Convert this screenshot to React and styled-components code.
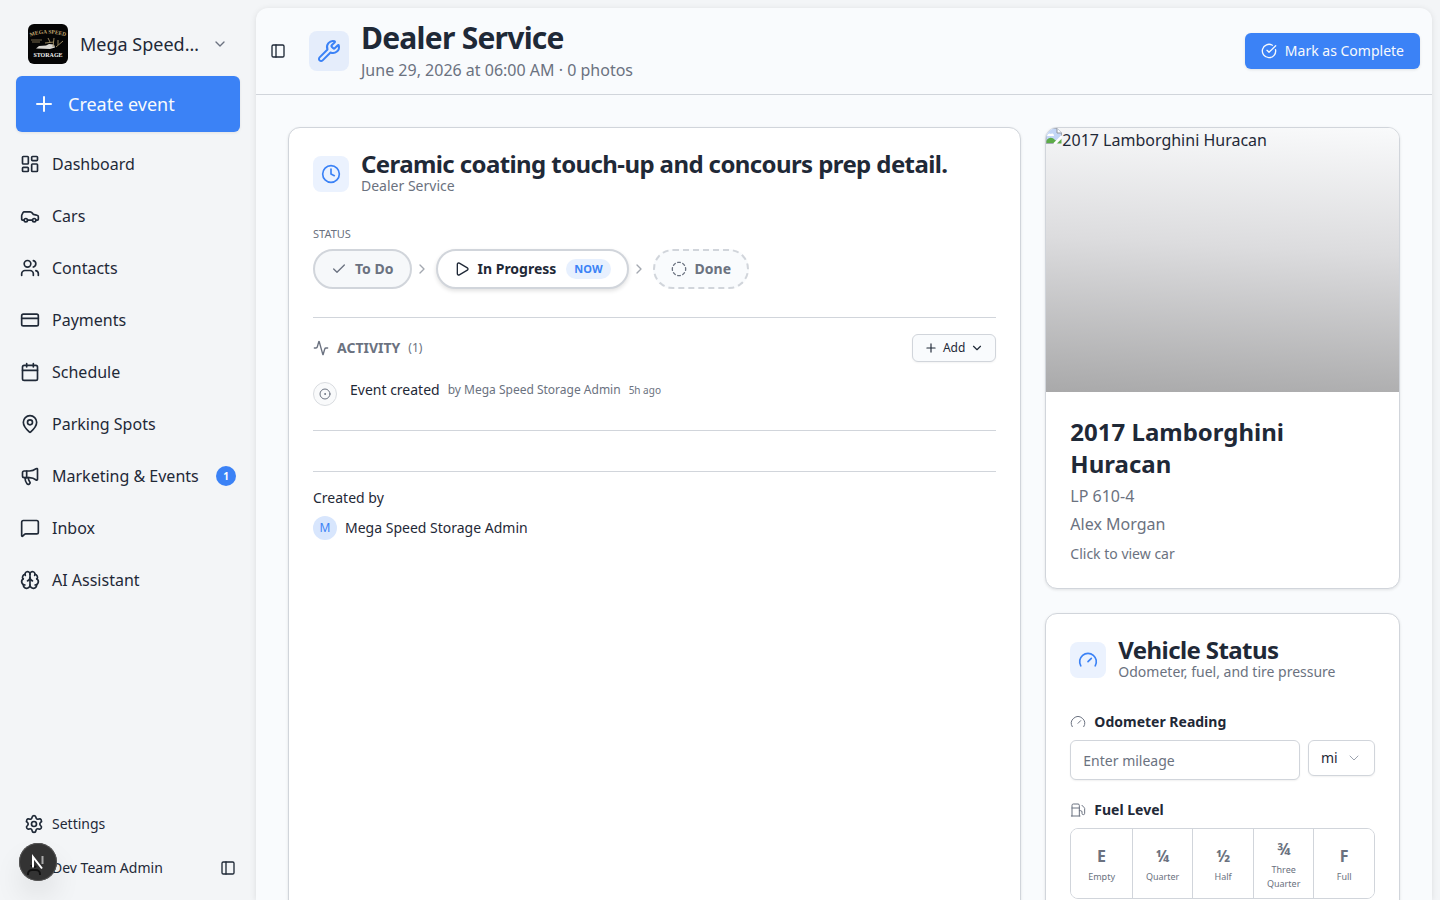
import React, { useState } from "react";
import styled, { createGlobalStyle, css } from "styled-components";
import {
  Activity,
  Brain,
  Calendar,
  Car,
  Check,
  ChevronDown,
  ChevronRight,
  CircleCheckBig,
  CircleDashed,
  CircleDot,
  Clock,
  CreditCard,
  Fuel,
  Gauge,
  LayoutDashboard,
  MapPin,
  Megaphone,
  PanelLeft,
  Play,
  Plus,
  Settings,
  User,
  Users,
  Wrench,
} from "lucide-react";

const InboxIcon = ({ size }) => (
  <svg
    width={size}
    height={size}
    viewBox="0 0 24 24"
    fill="none"
    stroke="currentColor"
    strokeWidth="2"
    strokeLinecap="round"
    strokeLinejoin="round"
  >
    <path d="M22 17a2 2 0 0 1-2 2H6.828a2 2 0 0 0-1.414.586l-2.202 2.202A.71.71 0 0 1 2 21.286V5a2 2 0 0 1 2-2h16a2 2 0 0 1 2 2z" />
  </svg>
);

const Logo = () => (
  <LogoBox viewBox="0 0 40 40" aria-hidden="true">
    <defs>
      <path id="arc" d="M1 13 Q20 6 39 13" />
    </defs>
    <rect width="40" height="40" fill="#050505" />
    <text fontSize="5.5" fontWeight="700" fill="#c2a871" textAnchor="middle">
      <textPath href="#arc" startOffset="50%">
        MEGA SPEED
      </textPath>
    </text>
    <path d="M3 16h11M4 18h8" stroke="#75664b" strokeWidth="1" />
    <path
      d="M8 24.500l3-2.500 7-.5 3-1.500 5 .5 1 3-5 1.500z"
      fill="#d9d7d2"
    />
    <path
      d="M20 14l2 4M26 14l-1 9M30 16v5M28 23l7-6M17 19l9-1"
      stroke="#96855f"
      strokeWidth="1"
      fill="none"
    />
    <text
      x="20"
      y="33"
      fontSize="6"
      fontWeight="700"
      fill="#f1f1ef"
      textAnchor="middle"
    >
      STORAGE
    </text>
  </LogoBox>
);

const BrokenImage = () => (
  <svg width="16" height="16" viewBox="0 0 16 16" aria-hidden="true">
    <path d="M0 0h11l5 5v4L9 16H0z" fill="#c3d6f6" />
    <path d="M1 8c1-3 3-3 4-2 2-1 3 0 3 2z" fill="#fff" />
    <path d="M0 16v-3c3-4 6-4 9-1l2 1-3 3z" fill="#5cab48" />
    <path d="M0 15.500V.5h11l4.500 4.500v4M0 15.500h8" fill="none" stroke="#a5abb5" />
    <path d="M11 .5V5h4.500" fill="#fff" stroke="#8f959e" />
    <path d="M16 8L8 16" stroke="#fff" strokeWidth="2" />
    <path d="M15.500 11v4.500H11z" fill="#5cab48" />
  </svg>
);

const navItems = [
  { label: "Dashboard", icon: LayoutDashboard },
  { label: "Cars", icon: Car },
  { label: "Contacts", icon: Users },
  { label: "Payments", icon: CreditCard },
  { label: "Schedule", icon: Calendar },
  { label: "Parking Spots", icon: MapPin },
  { label: "Marketing & Events", icon: Megaphone, count: 1 },
  { label: "Inbox", icon: InboxIcon },
  { label: "AI Assistant", icon: Brain },
];

const fuelLevels = [
  { mark: "E", name: "Empty" },
  { mark: "¼", name: "Quarter" },
  { mark: "½", name: "Half" },
  { mark: "¾", name: "Three Quarter" },
  { mark: "F", name: "Full" },
];

const Sidebar = () => (
  <Aside>
    <Workspace>
      <Logo />
      <span>Mega Speed Storage</span>
      <ChevronDown size={16} />
    </Workspace>
    <CreateButton>
      <Plus size={24} />
      Create event
    </CreateButton>
    <Nav>
      {navItems.map(({ label, icon: Icon, count }) => (
        <NavLink href="#" key={label}>
          <Icon size={20} />
          {label}
          {count && <Count>{count}</Count>}
        </NavLink>
      ))}
    </Nav>
    <Footer>
      <FooterLink href="#">
        <Settings size={20} />
        Settings
      </FooterLink>
      <UserRow>
        <FooterLink href="#">
          <User size={20} />
          Dev Team Admin
        </FooterLink>
        <IconButton aria-label="Collapse sidebar">
          <PanelLeft size={16} />
        </IconButton>
      </UserRow>
    </Footer>
    <DevBadge aria-label="Open dev tools">
      <svg width="38" height="38" viewBox="0 0 38 38" fill="none">
        <path
          d="M9 32v-1a4 4 0 0 1 4-4h4a4 4 0 0 1 4 4v1M12 22a3 3 0 0 0 5 1"
          stroke="#111"
          strokeWidth="2"
        />
        <path d="M14 24.500V14l9 11.500" stroke="#fff" strokeWidth="2" />
        <path d="M23.500 13v8" stroke="#aaa" strokeWidth="2" />
      </svg>
    </DevBadge>
  </Aside>
);

const EventCard = () => (
  <Card>
    <CardBody>
      <CardHead>
        <IconTile>
          <Clock size={20} />
        </IconTile>
        <div>
          <CardTitle>Ceramic coating touch-up and concours prep detail.</CardTitle>
          <CardSub>Dealer Service</CardSub>
        </div>
      </CardHead>
      <StatusLabel>STATUS</StatusLabel>
      <Steps>
        <Step $state="past">
          <Check size={16} />
          To Do
        </Step>
        <ChevronRight size={16} />
        <Step $state="current">
          <Play size={16} />
          In Progress
          <NowTag>NOW</NowTag>
        </Step>
        <ChevronRight size={16} />
        <Step $state="next">
          <CircleDashed size={16} />
          Done
        </Step>
      </Steps>
      <ActivitySection>
        <ActivityHead>
          <Activity size={16} />
          <h3>ACTIVITY</h3>
          <span>(1)</span>
          <AddButton>
            <Plus size={14} />
            Add
            <ChevronDown size={14} />
          </AddButton>
        </ActivityHead>
        <ActivityItem>
          <Dot>
            <CircleDot size={12} />
          </Dot>
          <p>
            Event created
            <span>by Mega Speed Storage Admin</span>
            <small>5h ago</small>
          </p>
        </ActivityItem>
      </ActivitySection>
      <Spacer />
      <CreatedBy>
        <p>Created by</p>
        <div>
          <Avatar>M</Avatar>
          Mega Speed Storage Admin
        </div>
      </CreatedBy>
    </CardBody>
  </Card>
);

const CarCard = () => (
  <Card>
    <Photo>
      <BrokenImage />
      <span>2017 Lamborghini Huracan</span>
    </Photo>
    <CardBody>
      <CarName>2017 Lamborghini Huracan</CarName>
      <CarLine>LP 610-4</CarLine>
      <CarLine>Alex Morgan</CarLine>
      <CarLink href="#">Click to view car</CarLink>
    </CardBody>
  </Card>
);

const VehicleStatus = () => {
  const [level, setLevel] = useState(null);
  const [mileage, setMileage] = useState("");

  return (
    <Card>
      <CardBody>
        <CardHead>
          <IconTile>
            <Gauge size={20} />
          </IconTile>
          <div>
            <CardTitle>Vehicle Status</CardTitle>
            <CardSub>Odometer, fuel, and tire pressure</CardSub>
          </div>
        </CardHead>
        <Fields>
          <div>
            <FieldLabel htmlFor="mileage">
              <Gauge size={16} strokeWidth={1.5} />
              Odometer Reading
            </FieldLabel>
            <OdometerRow>
              <Input
                id="mileage"
                placeholder="Enter mileage"
                value={mileage}
                onChange={(e) => setMileage(e.target.value)}
              />
              <UnitSelect>
                <select aria-label="Unit" defaultValue="mi">
                  <option>mi</option>
                  <option>km</option>
                </select>
                <ChevronDown size={16} strokeWidth={1.5} />
              </UnitSelect>
            </OdometerRow>
          </div>
          <div>
            <FieldLabel as="p" id="fuel">
              <Fuel size={16} strokeWidth={1.5} />
              Fuel Level
            </FieldLabel>
            <FuelGroup role="group" aria-labelledby="fuel">
              {fuelLevels.map(({ mark, name }) => (
                <FuelButton
                  key={name}
                  $active={level === name}
                  onClick={() => setLevel(name)}
                >
                  <b>{mark}</b>
                  <span>{name}</span>
                </FuelButton>
              ))}
            </FuelGroup>
          </div>
        </Fields>
      </CardBody>
    </Card>
  );
};

const App = () => {
  return (
    <Shell>
      <GlobalStyle />
      <Sidebar />
      <Main>
        <Header>
          <IconButton aria-label="Toggle sidebar">
            <PanelLeft size={16} />
          </IconButton>
          <HeaderTile>
            <Wrench size={24} />
          </HeaderTile>
          <div>
            <h1>Dealer Service</h1>
            <p>June 29, 2026 at 06:00 AM · 0 photos</p>
          </div>
          <CompleteButton>
            <CircleCheckBig size={16} />
            Mark as Complete
          </CompleteButton>
        </Header>
        <Content>
          <Column $span={2}>
            <EventCard />
          </Column>
          <Column>
            <CarCard />
            <VehicleStatus />
          </Column>
        </Content>
      </Main>
    </Shell>
  );
};

const GlobalStyle = createGlobalStyle`
  * {
    box-sizing: border-box;
    margin: 0;
  }

  body {
    background: #f3f5f7;
    color: #1f2937;
    font-family: "Noto Sans", sans-serif;
    font-size: 16px;
    line-height: 24px;
  }

  button, input, select {
    font: inherit;
    color: inherit;
    border: 0;
    padding: 0;
    background: none;
  }

  a {
    color: inherit;
    text-decoration: none;
  }

  svg {
    flex-shrink: 0;
  }
`;

const Shell = styled.div`
  display: flex;
  height: 100vh;
  overflow: hidden;
`;

const Aside = styled.aside`
  position: relative;
  width: 256px;
  flex-shrink: 0;
  display: flex;
  flex-direction: column;
  padding: 16px 16px 10px;
`;

const Workspace = styled.button`
  display: flex;
  align-items: center;
  gap: 12px;
  height: 56px;
  padding: 0 12px;
  margin-bottom: 4px;
  font-size: 18px;
  text-align: left;

  span {
    flex: 1;
    overflow: hidden;
    text-overflow: ellipsis;
    white-space: nowrap;
  }

  > svg:last-child {
    color: #6b7280;
  }
`;

const LogoBox = styled.svg`
  width: 40px;
  height: 40px;
  border-radius: 6px;
  font-family: "Liberation Serif", serif;
`;

const CreateButton = styled.button`
  display: flex;
  align-items: center;
  gap: 12px;
  height: 56px;
  padding: 0 16px;
  border-radius: 6px;
  background: #3b82f6;
  color: #f8fafc;
  font-size: 18px;
  box-shadow: 0 1px 3px rgba(0, 0, 0, 0.08);
`;

const Nav = styled.nav`
  display: flex;
  flex-direction: column;
  gap: 4px;
  padding-top: 8px;
`;

const NavLink = styled.a`
  display: flex;
  align-items: center;
  gap: 12px;
  height: 48px;
  padding: 0 4px;
`;

const Count = styled.span`
  width: 20px;
  margin-left: auto;
  border-radius: 50%;
  background: #3b82f6;
  color: #fff;
  font-size: 10px;
  line-height: 20px;
  font-weight: 700;
  text-align: center;
`;

const Footer = styled.div`
  margin-top: auto;
  padding: 0 4px 0 8px;
  font-size: 14px;
`;

const FooterLink = styled.a`
  display: flex;
  align-items: center;
  gap: 8px;
  height: 44px;
`;

const UserRow = styled.div`
  display: flex;
  align-items: center;
  justify-content: space-between;
`;

const IconButton = styled.button`
  display: flex;
  justify-content: center;
  align-items: center;
  width: 16px;
  height: 28px;
`;

const DevBadge = styled.button`
  position: absolute;
  left: 19px;
  bottom: 19px;
  width: 38px;
  height: 38px;
  border-radius: 50%;
  background: #333;
  box-shadow: 0 16px 32px -8px rgba(0, 0, 0, 0.24), inset 0 0 0 1px #555;
`;

const Main = styled.main`
  flex: 1;
  min-width: 0;
  display: flex;
  flex-direction: column;
  margin: 8px 8px 0 0;
  border-radius: 12px 12px 0 0;
  background: #f9fbfd;
  box-shadow: 0 1px 6px rgba(0, 0, 0, 0.1);
`;

const Header = styled.header`
  display: flex;
  align-items: center;
  padding: 12px 12px 12px 14px;
  border-bottom: 1px solid #d1d5db;

  h1 {
    font-size: 30px;
    line-height: 36px;
    font-weight: 700;
    letter-spacing: -0.025em;
  }

  p {
    margin-top: 2px;
    color: #6b7280;
  }
`;

const tile = css`
  display: grid;
  place-items: center;
  flex-shrink: 0;
  border-radius: 8px;
  margin-right: 12px;
  color: #3b82f6;
`;

const HeaderTile = styled.div`
  ${tile}
  width: 40px;
  height: 40px;
  margin-left: 23px;
  background: #e5edfb;
`;

const IconTile = styled.div`
  ${tile}
  width: 36px;
  height: 36px;
  background: #ebf2fe;
`;

const CompleteButton = styled.button`
  display: flex;
  align-items: center;
  gap: 8px;
  height: 36px;
  margin-left: auto;
  padding: 0 16px;
  border-radius: 6px;
  background: #3b82f6;
  color: #f8fafc;
  font-size: 14px;
  box-shadow: 0 1px 3px rgba(0, 0, 0, 0.1);
`;

const Content = styled.div`
  flex: 1;
  display: grid;
  grid-template-columns: repeat(3, minmax(0, 1fr));
  gap: 24px;
  padding: 32px;
`;

const Column = styled.div`
  display: flex;
  flex-direction: column;
  gap: 24px;
  grid-column: span ${({ $span }) => $span || 1};

  > :only-child {
    flex: 1;
  }
`;

const Card = styled.section`
  border: 1px solid #d1d5db;
  border-radius: 12px;
  background: #fff;
  box-shadow: 0 1px 3px rgba(0, 0, 0, 0.1);
  overflow: hidden;
`;

const CardBody = styled.div`
  padding: 24px;
`;

const CardHead = styled.div`
  display: flex;
  align-items: center;
`;

const CardTitle = styled.h2`
  font-size: 24px;
  line-height: 24px;
  font-weight: 700;
  letter-spacing: -0.025em;
`;

const CardSub = styled.p`
  font-size: 14px;
  line-height: 20px;
  color: #6b7280;
`;

const StatusLabel = styled.p`
  margin: 28px 0 6px;
  font-size: 11px;
  line-height: 19px;
  color: #6b7280;
`;

const Steps = styled.div`
  display: flex;
  align-items: center;

  > svg {
    margin: 0 6px 0 2px;
    color: #a3a8b0;
  }
`;

const Step = styled.button`
  display: flex;
  align-items: center;
  gap: 8px;
  height: 40px;
  padding: 0 16px;
  border: 2px solid #d1d5db;
  border-radius: 20px;
  font-size: 14px;
  font-weight: 700;
  color: #6b7280;
  background: #f6f8fa;

  ${({ $state }) =>
    $state === "current" &&
    css`
      color: #1f2937;
      background: #fff;
      box-shadow: 0 2px 4px rgba(0, 0, 0, 0.12);
    `}

  ${({ $state }) =>
    $state === "next" &&
    css`
      border-style: dashed;
      background: #f9fbfd;
    `}
`;

const NowTag = styled.span`
  margin-left: 2px;
  padding: 0 8px;
  border-radius: 10px;
  background: #e7f0fe;
  color: #3b82f6;
  font-size: 11px;
  line-height: 20px;
`;

const ActivitySection = styled.div`
  margin-top: 28px;
  padding: 16px 0 24px;
  border: 1px solid #d1d5db;
  border-width: 1px 0;
`;

const ActivityHead = styled.div`
  display: flex;
  align-items: center;
  gap: 8px;
  font-size: 12px;
  color: #6b7280;

  h3 {
    font-size: 14px;
    font-weight: 700;
  }
`;

const AddButton = styled.button`
  display: flex;
  align-items: center;
  gap: 5px;
  height: 28px;
  margin-left: auto;
  padding: 0 11px;
  border: 1px solid #d1d5db;
  border-radius: 6px;
  background: #f9fbfd;
  color: #1f2937;
  box-shadow: 0 1px 2px rgba(0, 0, 0, 0.05);
`;

const ActivityItem = styled.div`
  display: flex;
  gap: 13px;
  padding-top: 16px;

  p {
    display: flex;
    align-items: center;
    gap: 8px;
    height: 24px;
    font-size: 14px;
  }

  span {
    color: #6b7280;
    font-size: 12px;
  }

  small {
    color: #6b7280;
    font-size: 10px;
  }
`;

const Dot = styled.div`
  display: grid;
  place-items: center;
  width: 24px;
  height: 24px;
  margin-top: 4px;
  border: 1px solid #d9dce0;
  border-radius: 50%;
  background: #f9fafb;
  color: #6b7280;
`;

const Spacer = styled.div`
  height: 40px;
`;

const CreatedBy = styled.div`
  padding-top: 16px;
  border-top: 1px solid #d1d5db;
  font-size: 14px;
  line-height: 20px;

  div {
    display: flex;
    align-items: center;
    gap: 8px;
    padding-top: 8px;
  }
`;

const Avatar = styled.span`
  width: 24px;
  border-radius: 50%;
  background: #d8e6fd;
  color: #3b82f6;
  font-size: 12px;
  line-height: 24px;
  text-align: center;
`;

const Photo = styled.div`
  display: flex;
  height: 264px;
  background: linear-gradient(183deg, #f9fafb, #dcdcde 45%, #a9a9aa);
`;

const CarName = styled.h2`
  font-size: 24px;
  line-height: 32px;
  font-weight: 700;
`;

const CarLine = styled.p`
  padding-top: 4px;
  color: #6b7280;
`;

const CarLink = styled.a`
  display: block;
  padding-top: 8px;
  font-size: 14px;
  line-height: 20px;
  color: #6b7280;
`;

const Fields = styled.div`
  display: flex;
  flex-direction: column;
  gap: 20px;
  padding-top: 30px;
`;

const FieldLabel = styled.label`
  display: flex;
  align-items: center;
  gap: 8px;
  padding-bottom: 8px;
  font-size: 14px;
  line-height: 20px;
  font-weight: 700;

  svg {
    color: #6b7280;
  }
`;

const OdometerRow = styled.div`
  display: flex;
  align-items: flex-start;
  gap: 8px;
  font-size: 14px;
`;

const field = css`
  border: 1px solid #d1d5db;
  border-radius: 6px;
  background: #fff;
  box-shadow: 0 1px 2px rgba(0, 0, 0, 0.06);
`;

const Input = styled.input`
  ${field}
  flex: 1;
  min-width: 0;
  height: 40px;
  padding: 0 12px;

  &::placeholder {
    color: #6b7280;
  }
`;

const UnitSelect = styled.div`
  ${field}
  display: grid;
  align-items: center;
  width: 67px;
  height: 36px;

  select,
  svg {
    grid-area: 1 / 1;
  }

  select {
    appearance: none;
    height: 100%;
    padding: 0 12px;
  }

  svg {
    justify-self: end;
    margin-right: 12px;
    color: #9ca3af;
    pointer-events: none;
  }
`;

const FuelGroup = styled.div`
  display: grid;
  grid-template-columns: repeat(5, 1fr);
  border: 1px solid #d1d5db;
  border-radius: 8px;
  overflow: hidden;
`;

const FuelButton = styled.button`
  display: flex;
  flex-direction: column;
  align-items: center;
  justify-content: center;
  gap: 2px;
  padding: 8px 8px 7px;
  color: #6b7280;
  background: ${({ $active }) => ($active ? "#ebf2fe" : "#fff")};

  & + & {
    border-left: 1px solid #d1d5db;
  }

  b {
    font-weight: 700;
  }

  span {
    font-size: 9px;
    line-height: 14px;
  }
`;

export default App;
